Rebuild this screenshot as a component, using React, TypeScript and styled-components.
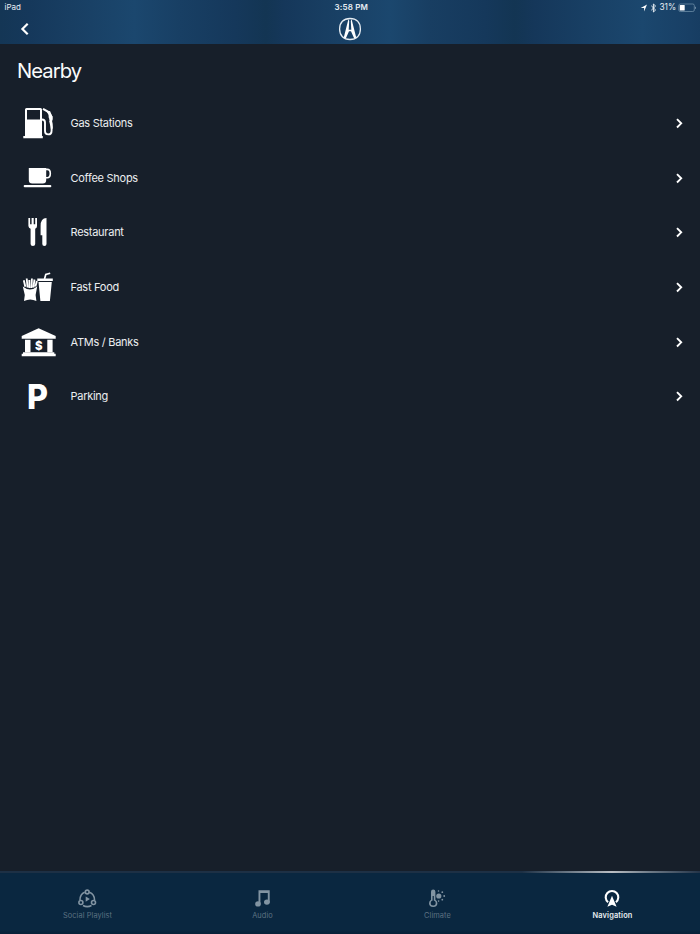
import React from 'react';
import styled, { createGlobalStyle } from 'styled-components';

const Global = createGlobalStyle`
  * { box-sizing: border-box; }
  html, body { margin: 0; background: #171f2a; }
  body { font-family: Inter, "Liberation Sans", sans-serif; color: #fff; }
  svg { display: block; }
`;

const Screen = styled.div`
  width: 700px;
  height: 934px;
  display: flex;
  flex-direction: column;
  overflow: hidden;
  background: #171f2a;
`;

const Header = styled.header`
  height: 44px;
  flex: none;
  background: linear-gradient(
    90deg,
    #143655 0px, #15385b 30px, #183e62 70px, #1b476e 134px,
    #183f64 180px, #15385b 235px, #133553 266px, #15375a 284px,
    #183e62 325px, #1b476e 390px, #183e62 430px, #15385b 485px,
    #133553 515px, #15375a 535px, #183f64 585px, #1b476e 642px, #183f65 690px, #173d62 700px
  );
`;

const StatusBar = styled.div`
  height: 14px;
  display: grid;
  grid-template-columns: 1fr auto 1fr;
  align-items: center;
  padding: 1px 4px 0 4.5px;
  font-size: 8px;
  line-height: 13px;
  color: #e6edf3;
`;

const Clock = styled.span`
  font-weight: 600;
  font-size: 8px;
  letter-spacing: 0.2px;
  padding-left: 2px;
`;

const StatusRight = styled.span`
  display: flex;
  align-items: center;
  justify-content: flex-end;
`;

const Percent = styled.span`
  margin: 0 2px 0 3px;
  font-size: 8.3px;
  letter-spacing: -0.05px;
`;

const NavBar = styled.div`
  height: 30px;
  display: grid;
  grid-template-columns: 1fr auto 1fr;
  align-items: center;
`;

const BackButton = styled.button`
  justify-self: start;
  margin: 0 0 0 19px;
  padding: 0;
  border: 0;
  background: none;
`;

const Main = styled.main`
  flex: 1;
  padding-top: 11px;
`;

const Title = styled.h1`
  margin: 0 0 8.8px 17px;
  font-size: 20.2px;
  font-weight: 400;
  line-height: 32px;
  letter-spacing: -0.95px;
  color: #fafbfc;
`;

const List = styled.ul`
  list-style: none;
  margin: 0;
  padding: 0;
`;

const Row = styled.li`
  display: flex;
  align-items: center;
  height: 54.67px;
  padding: 0 14px 0 18px;
`;

const RowIcon = styled.svg`
  width: 40px;
  height: 40px;
  fill: #fff;
  flex: none;
`;

const RowLabel = styled.span`
  flex: 1;
  padding-left: 12.5px;
  font-size: 11px;
  line-height: 16px;
  letter-spacing: -0.27px;
  color: #eceef0;
`;

const Footer = styled.nav`
  height: 63px;
  flex: none;
  background: linear-gradient(#0a2740 0, #0a2740 59px, #082038 63px);
`;

const Highlight = styled.div`
  height: 2px;
  background: linear-gradient(90deg, #1d3045 0 522px, #6e7b88 570px, #b9bec4 612px, #6e7b88 650px, #243448 700px);
`;

const Tabs = styled.div`
  display: grid;
  grid-template-columns: repeat(4, 1fr);
  padding-top: 15px;
`;

const Tab = styled.div<{ $active?: boolean }>`
  display: flex;
  flex-direction: column;
  align-items: center;
  color: ${p => (p.$active ? '#ffffff' : '#8294a2')};
`;

const TabIcon = styled.svg`
  width: 23px;
  height: 22px;
`;

const TabLabel = styled.span<{ $active?: boolean }>`
  font-size: 7.4px;
  line-height: 11px;
  letter-spacing: ${p => (p.$active ? '0.15px' : '0.08px')};
  font-weight: ${p => (p.$active ? 600 : 400)};
  color: ${p => (p.$active ? '#e8edf0' : '#5d7282')};
`;

const IconText = styled.text`
  font-family: Inter, sans-serif;
  font-weight: 800;
  text-anchor: middle;
`;

const Chevron = () => (
  <svg width="14" height="14" viewBox="0 0 14 14" fill="none" stroke="#fff" strokeWidth="1.9">
    <path d="M5 3.100 9.200 7.300 5 11.500" />
  </svg>
);

const GasIcon = () => (
  <RowIcon viewBox="0 0 40 40">
    <path fillRule="evenodd" d="M8.5 5h14q1.5 0 1.5 1.5V33h.8v2.3H5.3V33H7V6.500Q7 5 8.500 5zM9 7v9.500h13V7z" />
    <path d="M24 16.500q3 .2 3 3v8.200q0 3.700 3.300 3.700t3.300-4V24l-1.600-6.500" fill="none" stroke="#fff" strokeWidth="1.900" />
    <path d="m25 5.800 5.200 3 3.300 5V16l-.8.600q1.300 4 1 9" fill="none" stroke="#fff" strokeWidth="2.100" />
    <path d="m28.500 8.500 3.500-.5 2.400 5.500v4.200L32 18l-1.300-3.500-.2-3z" />
  </RowIcon>
);

const CoffeeIcon = () => (
  <RowIcon viewBox="0 0 40 40">
    <path d="M10.800 10h17.400v12q0 3.500-3.500 3.500H14.300q-3.500 0-3.500-3.500z" />
    <path d="M27.500 11.400h1.800q3 0 3 4.200t-3 4.200h-1.800" fill="none" stroke="#fff" strokeWidth="1.600" />
    <rect x="5.700" y="27" width="27.600" height="2.300" rx="1" />
  </RowIcon>
);

const RestaurantIcon = () => (
  <RowIcon viewBox="0 0 40 40">
    <path d="M10.400 6h1.700v6.200h1.500V6h2.100v6.200h1.500V6H19v8q0 2-1.800 2.700V32q0 1.900-2.300 1.900T12.600 32V16.700q-2-.7-2.200-2.700z" />
    <path d="M28.500 6v26q0 1.900-2.100 1.900T24.300 32v-8.700h-1.700V14q0-8 5.900-8z" />
  </RowIcon>
);

const FastFoodIcon = () => (
  <RowIcon viewBox="0 0 40 40">
    <path d="M4.800 19.500q7.200 6 14.400 0l-1.600 8.500.8 6q-6.200-3-12.400 0l.8-6z" />
    <path d="m5.800 13.200 1.500 6.500M8.700 11.500l.9 9M11.300 13l.2 8M13.900 11.500l-.4 9.500M16.500 12.500l-1.100 8M18.900 14l-1.500 5.500" fill="none" stroke="#fff" strokeWidth="1.850" />
    <path d="M19.300 11.500h15.500v2.400H19.300zM20.500 14.900h13.300l-1.900 19.200h-9.500z" />
    <path d="m26.500 12 1.300-4.500 4.400-1.300" fill="none" stroke="#fff" strokeWidth="1.700" />
  </RowIcon>
);

const BankIcon = () => (
  <RowIcon viewBox="0 0 40 40">
    <path d="M20.600 6.300 37.700 14v2.700H3.700V14z" />
    <path d="M7 17.700h5.500v12.600H7zM29.300 17.700h5.300v12.600h-5.300z" />
    <path d="M5 30.300h31.300v1.400h1.400v2.600H3.700v-2.600H5z" />
    <IconText x="20.800" y="28" fontSize="11.500">$</IconText>
  </RowIcon>
);

const ParkingIcon = () => (
  <RowIcon viewBox="0 0 40 40">
    <IconText x="19.500" y="32.500" fontSize="34" textLength="21" lengthAdjust="spacingAndGlyphs">P</IconText>
  </RowIcon>
);

const places = [
  { label: 'Gas Stations', Icon: GasIcon },
  { label: 'Coffee Shops', Icon: CoffeeIcon },
  { label: 'Restaurant', Icon: RestaurantIcon },
  { label: 'Fast Food', Icon: FastFoodIcon },
  { label: 'ATMs / Banks', Icon: BankIcon },
  { label: 'Parking', Icon: ParkingIcon },
];

const SocialIcon = () => (
  <TabIcon viewBox="0 0 23 22" fill="none" stroke="currentColor" strokeWidth="1.600">
    <path d="M8.700 4.200Q4 6 4 12M13.300 4.200Q18.500 6 18.500 12M7 17.500q4.200 2.200 8.500 0" />
    <circle cx="11.200" cy="4" r="1.900" />
    <circle cx="4.900" cy="14.500" r="2" />
    <circle cx="17.500" cy="14.500" r="2" />
    <path d="m9.700 8.500 4.200 2.600-4.200 2.600z" fill="currentColor" stroke="none" />
  </TabIcon>
);

const AudioIcon = () => (
  <TabIcon viewBox="0 0 23 22" fill="currentColor">
    <path d="M7.500 2.200h11.200v12.500h-1.900V4.900H9.400v11.500H7.500z" />
    <ellipse cx="7" cy="15.900" rx="2.800" ry="2.600" />
    <ellipse cx="15.900" cy="14.100" rx="2.900" ry="2.600" />
  </TabIcon>
);

const ClimateIcon = () => (
  <TabIcon viewBox="0 0 23 22" fill="currentColor">
    <path d="M5 11.800V3.700q0-2.200 2.200-2.200t2.200 2.200v8.100q2 1.100 2 3.400 0 3.700-4.200 3.700T3 15.200q0-2.300 2-3.400z" />
    <circle cx="7.200" cy="15.100" r="2.500" fill="#0a2740" />
    <path d="M6.600 8h1.200v6H6.600z" fill="#0a2740" />
    <circle cx="12.800" cy="8" r="2.600" />
    <g>
      <circle cx="12.500" cy="3" r=".8" /><circle cx="16.300" cy="4.200" r=".9" />
      <circle cx="18.200" cy="8" r=".9" /><circle cx="16.300" cy="11.700" r=".9" />
      <circle cx="12.600" cy="13.100" r=".8" />
    </g>
  </TabIcon>
);

const NavigationIcon = () => (
  <TabIcon viewBox="0 0 23 22" fill="currentColor">
    <path d="M7.100 14.200A6.300 6.300 0 1 1 14.900 14.200" fill="none" stroke="currentColor" strokeWidth="2.100" />
    <path d="m11 7.700 4.600 11L11 16.700l-4.600 2z" />
  </TabIcon>
);

const tabs = [
  { label: 'Social Playlist', Icon: SocialIcon },
  { label: 'Audio', Icon: AudioIcon },
  { label: 'Climate', Icon: ClimateIcon },
  { label: 'Navigation', Icon: NavigationIcon, active: true },
];

const Logo = () => (
  <svg width="24" height="24" viewBox="0 0 24 24">
    <path d="M12 1.500C18.500 1.500 22.400 5.500 22.400 12S18.500 22.500 12 22.500 1.600 18.500 1.600 12 5.500 1.500 12 1.500z" fill="none" stroke="#e6edf3" strokeWidth="1.300" />
    <path d="M10.400 2.300 5.800 20.400l2 1.200 3.200-7.300h2l3.200 7.300 2-1.200-4.600-18.100-.8 1.700.5 8.700h-2.600l.5-8.700z" fill="#fff" />
  </svg>
);

export default function App() {
  return (
    <>
      <Global />
      <Screen>
        <Header>
          <StatusBar>
            <span>iPad</span>
            <Clock>3:58 PM</Clock>
            <StatusRight>
              <svg width="18" height="10" viewBox="0 0 18 10">
                <path d="M8 1.500 5.100 8.400V5.100H1.700z" fill="#fff" />
                <path d="m12.300 2.800 4.300 4.200-2.200 2V1l2.200 2-4.300 4.200" fill="none" stroke="#e6edf3" strokeWidth="1" />
              </svg>
              <Percent>31%</Percent>
              <svg width="18" height="10" viewBox="0 0 18 10">
                <rect x=".8" y="1" width="15.500" height="7.500" rx="1.500" fill="none" stroke="#6b8ba6" strokeWidth=".8" />
                <rect x="1.800" y="1.900" width="4.900" height="5.700" rx=".5" fill="#fff" />
                <path d="M17 3.500q1 .2 1 1.300T17 6.100z" fill="#7893aa" />
              </svg>
            </StatusRight>
          </StatusBar>
          <NavBar>
            <BackButton aria-label="Back">
              <svg width="12" height="14" viewBox="0 0 12 14" fill="none" stroke="#fff" strokeWidth="2.200">
                <path d="M8.700 1.700 3.400 7l5.300 5.300" />
              </svg>
            </BackButton>
            <Logo />
            <span />
          </NavBar>
        </Header>
        <Main>
          <Title>Nearby</Title>
          <List>
            {places.map(({ label, Icon }) => (
              <Row key={label}>
                <Icon />
                <RowLabel>{label}</RowLabel>
                <Chevron />
              </Row>
            ))}
          </List>
        </Main>
        <Footer>
          <Highlight />
          <Tabs>
            {tabs.map(({ label, Icon, active }) => (
              <Tab key={label} $active={active}>
                <Icon />
                <TabLabel $active={active}>{label}</TabLabel>
              </Tab>
            ))}
          </Tabs>
        </Footer>
      </Screen>
    </>
  );
}
